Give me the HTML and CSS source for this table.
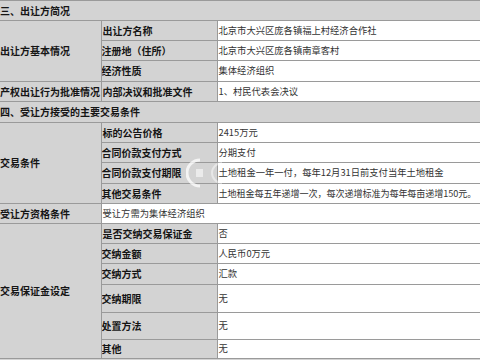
FILE: index.html
```html
<!DOCTYPE html>
<html lang="zh-CN">
<head>
<meta charset="utf-8">
<title>出让方简况</title>
<link rel="stylesheet" href="styles.css">
</head>
<body>
<div class="sheet">
<table class="deal">
  <colgroup><col class="c1"><col class="c2"><col class="c3"></colgroup>
  <tr class="sec"><td colspan="3">三、出让方简况</td></tr>
  <tr><td rowspan="3" class="lab">出让方基本情况</td><td class="lab">出让方名称</td><td class="val">北京市大兴区庞各镇福上村经济合作社</td></tr>
  <tr><td class="lab">注册地（住所）</td><td class="val">北京市大兴区庞各镇南章客村</td></tr>
  <tr class="h21"><td class="lab">经济性质</td><td class="val">集体经济组织</td></tr>
  <tr><td class="lab">产权出让行为批准情况</td><td class="lab">内部决议和批准文件</td><td class="val">1、村民代表会决议</td></tr>
  <tr class="sec h21"><td colspan="3">四、受让方接受的主要交易条件</td></tr>
  <tr><td rowspan="4" class="lab">交易条件</td><td class="lab">标的公告价格</td><td class="val">2415万元</td></tr>
  <tr><td class="lab">合同价款支付方式</td><td class="val">分期支付</td></tr>
  <tr class="h21"><td class="lab">合同价款支付期限</td><td class="val">土地租金一年一付，每年12月31日前支付当年土地租金</td></tr>
  <tr><td class="lab">其他交易条件</td><td class="val tight">土地租金每五年递增一次，每次递增标准为每年每亩递增150元。</td></tr>
  <tr><td class="lab">受让方资格条件</td><td colspan="2" class="val">受让方需为集体经济组织</td></tr>
  <tr><td rowspan="6" class="lab">交易保证金设定</td><td class="lab">是否交纳交易保证金</td><td class="val">否</td></tr>
  <tr><td class="lab">交纳金额</td><td class="val">人民币0万元</td></tr>
  <tr class="h21"><td class="lab">交纳方式</td><td class="val">汇款</td></tr>
  <tr class="h28"><td class="lab">交纳期限</td><td class="val">无</td></tr>
  <tr class="h27"><td class="lab">处置方法</td><td class="val">无</td></tr>
  <tr class="h19"><td class="lab">其他</td><td class="val">无</td></tr>
</table>
<svg class="mark" width="60" height="32" viewBox="0 0 60 32" aria-hidden="true">
  <path d="M14 3 A13 13 0 0 0 14 29" fill="none" stroke="#fff" stroke-width="3" opacity="0.75"/>
  <rect x="10" y="12" width="7" height="8" fill="#fff" opacity="0.55"/>
  <path d="M36 6 A10 10 0 0 0 36 26" fill="none" stroke="#fff" stroke-width="2" opacity="0.45"/>
</svg>
</div>
</body>
</html>
```

FILE: styles.css
```css
html, body {
  margin: 0;
  padding: 0;
  background: #d3d3d3;
  overflow: hidden;
}

.sheet {
  position: relative;
  width: 480px;
  height: 360px;
  overflow: hidden;
}

.deal {
  width: 480px;
  table-layout: fixed;
  border-collapse: collapse;
  font-family: "Noto Sans CJK SC", "Noto Sans", sans-serif;
  line-height: 1.2;
}

.c1 { width: 101px; }
.c2 { width: 116px; }

.deal td {
  border: 1px solid #9a9a9a;
  padding: 0 0 0 1px;
  height: 19px;
  vertical-align: middle;
  white-space: nowrap;
  overflow: hidden;
}

.deal td:first-child { border-left: none; }
.deal td:last-child { border-right: none; }

.deal .h21 td { height: 20px; }
.deal .h28 td { height: 27px; }
.deal .h27 td { height: 26px; }
.deal .h19 td { height: 18px; }

.sec td {
  background: #d3d3d3;
  font-size: 10px;
  font-weight: bold;
  color: #151515;
  padding-left: 0;
}

.lab {
  background: #d3d3d3;
  font-size: 10px;
  font-weight: bold;
  color: #151515;
}

.deal td.lab:first-child { padding-left: 0; }

.val {
  background: #fff;
  font-size: 9.3px;
  color: #333;
}

.deal td.tight {
  font-size: 9.1px;
  letter-spacing: -0.1px;
}

.mark {
  position: absolute;
  left: 186px;
  top: 157px;
}
```
